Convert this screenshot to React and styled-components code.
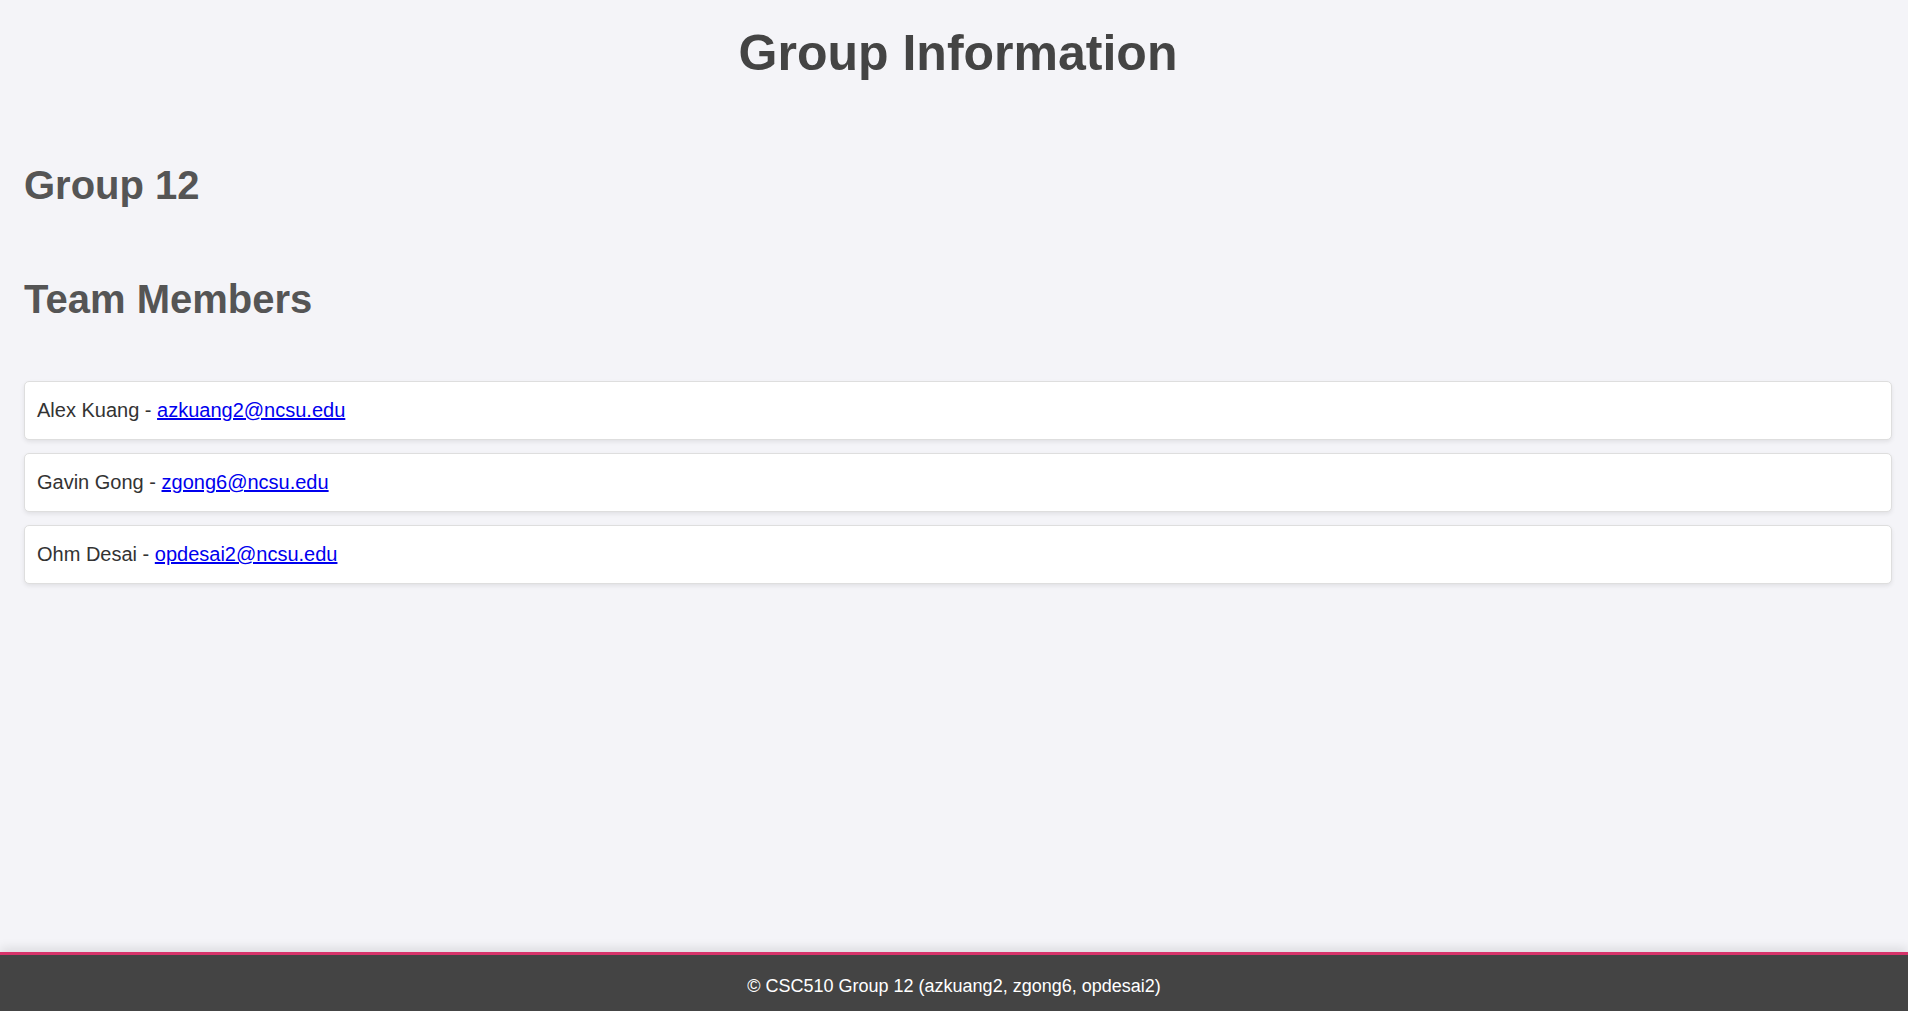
import React from "react";
import styled, { createGlobalStyle } from "styled-components";

const members = [
    { name: "Alex Kuang", email: "azkuang2@ncsu.edu" },
    { name: "Gavin Gong", email: "zgong6@ncsu.edu" },
    { name: "Ohm Desai", email: "opdesai2@ncsu.edu" },
];

function App() {
    return (
        <>
            <GlobalStyle />
            <Page>
                <Main>
                    <Title>Group Information</Title>
                    <Section>
                        <Heading>Group 12</Heading>
                    </Section>
                    <Section>
                        <Heading>Team Members</Heading>
                        <List>
                            {members.map((m) => (
                                <Member key={m.email}>
                                    {m.name} -{" "}
                                    <Mail href={`mailto:${m.email}`}>
                                        {m.email}
                                    </Mail>
                                </Member>
                            ))}
                        </List>
                    </Section>
                </Main>
                <Footer>
                    © CSC510 Group 12 (azkuang2, zgong6, opdesai2)
                </Footer>
            </Page>
        </>
    );
}

export default App;

const GlobalStyle = createGlobalStyle`
    * {
        box-sizing: border-box;
    }
    body {
        margin: 0;
        background: #f4f4f8;
        font-family: "Liberation Sans", Arial, sans-serif;
        color: #333;
    }
`;
const Page = styled.div`
    min-height: 100vh;
    display: flex;
    flex-direction: column;
`;
const Main = styled.main`
    flex: 1;
    padding: 24px 16px 40px 24px;
`;
const Title = styled.h1`
    margin: 0 0 81px;
    text-align: center;
    font-size: 50px;
    font-weight: bold;
    color: #444;
`;
const Section = styled.section`
    margin-bottom: 69px;
    &:last-child {
        margin-bottom: 0;
    }
`;
const Heading = styled.h2`
    margin: 0;
    font-size: 40px;
    font-weight: bold;
    color: #555;
`;
const List = styled.ul`
    list-style: none;
    margin: 59px 0 0;
    padding: 0;
    display: flex;
    flex-direction: column;
    gap: 13px;
`;
const Member = styled.li`
    background: #fff;
    border: 1px solid #dedede;
    border-radius: 5px;
    box-shadow: 0 2px 4px rgba(0, 0, 0, 0.08);
    padding: 17px 12px;
    font-size: 20px;
    color: #333;
`;
const Mail = styled.a`
    color: #0000ee;
    text-decoration: underline;
`;
const Footer = styled.footer`
    background: #444;
    border-top: 3px solid #d6336a;
    box-shadow: 0 -4px 10px rgba(0, 0, 0, 0.1);
    color: #fff;
    text-align: center;
    font-size: 18px;
    padding: 21px 0 14px;
`;
